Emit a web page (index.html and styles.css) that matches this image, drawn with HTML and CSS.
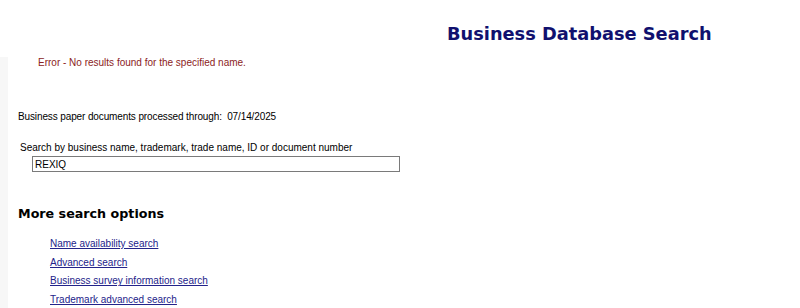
FILE: index.html
```html
<!DOCTYPE html>
<html>
<head>
<meta charset="utf-8">
<title>Business Database Search</title>
<link rel="stylesheet" href="styles.css">
</head>
<body>
<header class="top">
  <h1 class="title">Business Database Search</h1>
</header>
<div class="layout">
  <div class="side"></div>
  <main class="content">
    <p class="error">Error - No results found for the specified name.</p>
    <p class="processed">Business paper documents processed through:&nbsp; 07/14/2025</p>
    <form class="search">
      <label class="search-label" for="q">Search by business name, trademark, trade name, ID or document number</label>
      <input class="search-input" id="q" type="text" value="REXIQ">
    </form>
    <h2 class="more">More search options</h2>
    <ul class="links">
      <li><a href="#">Name availability search</a></li>
      <li><a href="#">Advanced search</a></li>
      <li><a href="#">Business survey information search</a></li>
      <li><a href="#">Trademark advanced search</a></li>
    </ul>
  </main>
</div>
</body>
</html>
```
FILE: styles.css
```css
html, body {
  margin: 0;
  padding: 0;
  background: #fff;
}
body {
  font-family: "Liberation Sans", Arial, sans-serif;
  color: #000;
  width: 800px;
  height: 308px;
  overflow: hidden;
}
.top {
  height: 57px;
  display: flex;
  justify-content: flex-start;
  padding-left: 447px;
  box-sizing: border-box;
}
.title {
  margin: 23px 0 0 0;
  font-family: "DejaVu Sans", Verdana, sans-serif;
  font-weight: bold;
  font-size: 17.8px;
  line-height: 22px;
  color: #10106e;
}
.layout {
  display: flex;
  height: 251px;
}
.side {
  width: 8px;
  background: #f7f7f7;
}
.content {
  flex: 1;
  padding-left: 10px;
}
.error {
  margin: 0 0 0 20px;
  font-size: 10px;
  line-height: 12px;
  color: #8b2323;
}
.processed {
  margin: 42px 0 0 0;
  font-size: 10px;
  letter-spacing: -0.12px;
  line-height: 12px;
}
.search {
  margin: 19px 0 0 2px;
  display: flex;
  flex-direction: column;
  align-items: flex-start;
}
.search-label {
  font-size: 10px;
  line-height: 12px;
}
.search-input {
  margin: 2px 0 0 12px;
  width: 368px;
  height: 16px;
  box-sizing: border-box;
  border: 1px solid #7a7a7a;
  padding: 0 2px;
  font-family: "Liberation Sans", Arial, sans-serif;
  font-size: 10px;
  color: #000;
}
.more {
  margin: 34px 0 0 0;
  font-family: "DejaVu Sans", Verdana, sans-serif;
  font-weight: bold;
  font-size: 12.7px;
  line-height: 16px;
}
.links {
  list-style: none;
  margin: 13px 0 0 32px;
  padding: 0;
}
.links li {
  font-size: 10px;
  line-height: 18.7px;
}
.links a {
  color: #23238a;
  text-decoration: underline;
}
```
